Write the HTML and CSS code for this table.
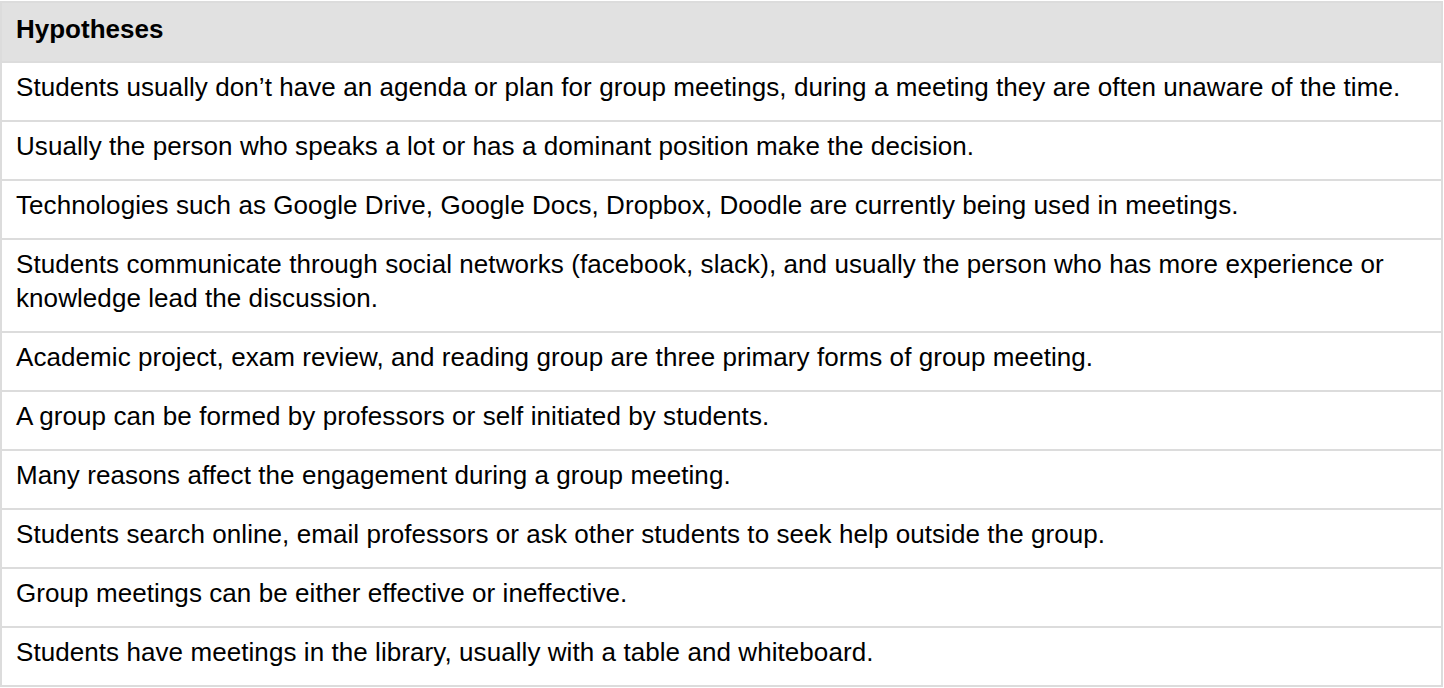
FILE: index.html
```html
<!DOCTYPE html>
<html>
<head>
<meta charset="utf-8">
<link rel="stylesheet" href="styles.css">
</head>
<body>
<table class="hyp">
  <thead>
    <tr><th>Hypotheses</th></tr>
  </thead>
  <tbody>
    <tr><td>Students usually don’t have an agenda or plan for group meetings, during a meeting they are often unaware of the time.</td></tr>
    <tr><td>Usually the person who speaks a lot or has a dominant position make the decision.</td></tr>
    <tr><td>Technologies such as Google Drive, Google Docs, Dropbox, Doodle are currently being used in meetings.</td></tr>
    <tr><td>Students communicate through social networks (facebook, slack), and usually the person who has more experience or knowledge lead the discussion.</td></tr>
    <tr><td>Academic project, exam review, and reading group are three primary forms of group meeting.</td></tr>
    <tr><td>A group can be formed by professors or self initiated by students.</td></tr>
    <tr><td>Many reasons affect the engagement during a group meeting.</td></tr>
    <tr><td>Students search online, email professors or ask other students to seek help outside the group.</td></tr>
    <tr><td>Group meetings can be either effective or ineffective.</td></tr>
    <tr><td>Students have meetings in the library, usually with a table and whiteboard.</td></tr>
  </tbody>
</table>
</body>
</html>
```
FILE: styles.css
```css
html, body {
  margin: 0;
  padding: 0;
  background: #ffffff;
}
body {
  padding: 1px 1px 0 0;
  font-family: "Liberation Sans", Arial, sans-serif;
  color: #000;
}
.hyp {
  width: 1443px;
  border-collapse: collapse;
  font-size: 26px;
  line-height: 34px;
}
.hyp th, .hyp td {
  border: 2px solid #dcdcdc;
  padding: 7px 14px 16px 14px;
  text-align: left;
  vertical-align: top;
}
.hyp td {
  letter-spacing: 0.07px;
}
.hyp th {
  background: #e1e1e1;
  font-weight: bold;
  padding-top: 9px;
  padding-bottom: 15px;
}
```
